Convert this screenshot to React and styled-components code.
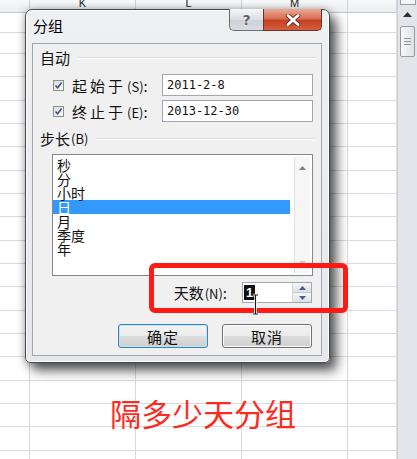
import React from "react";
import styled, { createGlobalStyle } from "styled-components";

const Global = createGlobalStyle`
  html, body { margin: 0; padding: 0; }
  body {
    width: 417px; height: 459px; overflow: hidden; background: #fff;
    font-family: "Noto Sans CJK SC", "Noto Sans", sans-serif;
  }
`;

const Screen = styled.div`
  position: relative;
  width: 417px;
  height: 459px;
  overflow: hidden;
  display: flex;
  background: #fff;
`;

const Sheet = styled.div`
  flex: 1;
  display: grid;
  grid-template-columns: 30px 106px 106px 106px 49px;
  grid-template-rows: 13px 20px 21px repeat(18, 23.33px);
  overflow: hidden;
`;

const Cell = styled.div`
  border-right: 1px solid #d8dadc;
  border-bottom: 1px solid #d8dadc;
`;

const HeaderCell = styled(Cell)`
  background: linear-gradient(#f7f8f9, #eceef0);
  border-bottom-color: #c3c6ca;
  border-right-color: #cfd2d6;
  overflow: hidden;
  text-align: center;
  font: 11px "Liberation Sans", Arial, sans-serif;
  color: #222;
  & > span { display: block; line-height: 13px; margin-top: -3px; }
`;

const PageScroll = styled.div`
  width: 20px;
  flex-shrink: 0;
  box-sizing: border-box;
  background: #e2e5e9;
  border-left: 1px solid #cdd1d6;
  display: flex;
  flex-direction: column;
  align-items: center;
`;

const SplitBox = styled.div`
  width: 16px;
  height: 5px;
  box-sizing: border-box;
  border: 1px solid #9aa0a8;
  border-top: none;
  background: #f5f6f7;
`;

const ArrowUp = styled.svg`
  margin-top: 7px;
  display: block;
`;

const Thumb = styled.div`
  margin-top: 9px;
  width: 15px;
  height: 31px;
  box-sizing: border-box;
  border: 1px solid #959ba3;
  border-radius: 2px;
  background: linear-gradient(90deg, #f8f9fa, #dfe2e6);
  display: flex;
  flex-direction: column;
  justify-content: center;
  align-items: center;
  gap: 2px;
  & > i { display: block; width: 7px; height: 1px; background: #8d939b; }
`;

const Dialog = styled.div`
  position: absolute;
  left: 25px;
  top: 9px;
  width: 305px;
  height: 354px;
  box-sizing: border-box;
  border: 1px solid #45484d;
  border-radius: 7px 7px 5px 5px;
  background: linear-gradient(#eef0f2, #e5e7ea);
  box-shadow: inset 0 0 0 1px rgba(255, 255, 255, 0.85),
    0 1px 8px rgba(0, 0, 0, 0.35), 7px 8px 12px rgba(0, 0, 0, 0.6);
  display: flex;
  flex-direction: column;
`;

const TitleBar = styled.div`
  height: 33px;
  flex-shrink: 0;
  display: flex;
  align-items: flex-start;
  padding: 0 7px;
`;

const Title = styled.div`
  flex: 1;
  margin-top: 7px;
  font-size: 15px;
  line-height: 18px;
  color: #000;
`;

const CaptionButtons = styled.div`
  display: flex;
  margin-top: -1px;
`;

const HelpBtn = styled.div`
  width: 34px;
  height: 22px;
  box-sizing: border-box;
  border: 1px solid #6a6e74;
  border-top: none;
  border-right: none;
  border-radius: 0 0 0 5px;
  background: linear-gradient(#f6f7f8, #dadde1 50%, #cdd1d5 51%, #d9dce0);
  display: flex;
  align-items: center;
  justify-content: center;
  font: bold 14px "DejaVu Sans", sans-serif;
  color: #5d6168;
  text-shadow: 0 0 2px #fff, 0 0 1px #fff;
`;

const CloseBtn = styled.div`
  width: 59px;
  height: 22px;
  box-sizing: border-box;
  border: 1px solid #6b3226;
  border-top: none;
  border-radius: 0 0 5px 0;
  background: linear-gradient(#eaa894, #d9705a 45%, #c6401f 55%, #d45f42);
  display: flex;
  align-items: center;
  justify-content: center;
`;

const Client = styled.div`
  flex: 1;
  margin: 0 7px 6px 6px;
  box-sizing: border-box;
  border: 1px solid #a2a7ad;
  background: #f0f0f0;
  padding: 5px 6px 0 7px;
  display: flex;
  flex-direction: column;
`;

const GroupHeader = styled.div`
  display: flex;
  align-items: center;
  height: 17px;
  margin-top: ${(p) => p.$top || 0}px;
  font-size: 15px;
  line-height: 17px;
  color: #111;
  &::after {
    content: "";
    flex: 1;
    margin-left: 8px;
    border-top: 1px solid #d5dfe5;
    border-bottom: 1px solid #fff;
  }
`;

const Key = styled.span`
  font-size: 13px;
  letter-spacing: 0;
  margin-left: 1px;
`;

const FieldRow = styled.div`
  display: flex;
  align-items: center;
  height: 22px;
  margin: ${(p) => p.$top}px 2px 0 13px;
`;

const Check = styled.div`
  width: 11px;
  height: 11px;
  box-sizing: border-box;
  border: 1px solid #8e8f8f;
  background: linear-gradient(135deg, #dcdcdc, #fbfbfb);
  display: flex;
  align-items: center;
  justify-content: center;
`;

const FieldLabel = styled.div`
  width: 90px;
  margin-left: 8px;
  font-size: 15px;
  letter-spacing: 3px;
  color: #111;
  white-space: nowrap;
`;

const TextInput = styled.div`
  flex: 1;
  height: 22px;
  box-sizing: border-box;
  border: 1px solid #a3a6ad;
  background: #fff;
  padding-left: 4px;
  display: flex;
  align-items: center;
  font: 12px "DejaVu Sans Mono", "Liberation Mono", monospace;
  color: #111;
`;

const ListBox = styled.div`
  margin: 7px 2px 0 12px;
  height: 122px;
  box-sizing: border-box;
  border: 1px solid #828790;
  background: #fff;
  display: flex;
`;

const Items = styled.div`
  flex: 1;
  padding-top: 3px;
  margin-right: 4px;
`;

const Item = styled.div`
  height: 14px;
  line-height: 14px;
  font-size: 14px;
  padding-left: 4px;
  overflow: visible;
  color: ${(p) => (p.$selected ? "#fff" : "#111")};
  background: ${(p) => (p.$selected ? "#3399ff" : "transparent")};
  white-space: nowrap;
`;

const ListScroll = styled.div`
  width: 16px;
  margin: 2px 2px 2px 0;
  box-sizing: border-box;
  border-left: 1px solid #e2e2e2;
  background: #f6f6f6;
  display: flex;
  flex-direction: column;
  justify-content: space-between;
  align-items: center;
  padding: 9px 0 8px;
`;

const DaysRow = styled.div`
  display: flex;
  justify-content: flex-end;
  align-items: center;
  gap: 15px;
  height: 21px;
  margin: 6px 3px 0 0;
`;

const DaysLabel = styled.div`
  font-size: 15px;
  color: #111;
  white-space: nowrap;
`;

const SpinBox = styled.div`
  width: 70px;
  height: 21px;
  box-sizing: border-box;
  border: 1px solid #a3a6ad;
  background: #fff;
  display: flex;
`;

const SpinValue = styled.div`
  flex: 1;
  display: flex;
  align-items: center;
  padding-left: 1px;
  & > span {
    display: inline-block;
    background: #111;
    color: #fff;
    font: bold 13px/15px "Liberation Sans", Arial, sans-serif;
    padding: 0 2px;
  }
`;

const SpinButtons = styled.div`
  width: 18px;
  display: flex;
  flex-direction: column;
  border-left: 1px solid #d3d7dc;
`;

const SpinButton = styled.div`
  flex: 1;
  display: flex;
  align-items: center;
  justify-content: center;
  background: linear-gradient(#f6f7f8, #dde0e4);
  border-bottom: ${(p) => (p.$top ? "1px solid #c5cad0" : "none")};
`;

const ButtonRow = styled.div`
  display: flex;
  justify-content: flex-end;
  gap: 14px;
  margin: 21px 3px 0 0;
`;

const DlgButton = styled.div`
  width: 90px;
  height: 24px;
  box-sizing: border-box;
  border-radius: 3px;
  border: 1px solid ${(p) => (p.$primary ? "#3c7fb1" : "#707070")};
  box-shadow: inset 0 0 0 1px ${(p) => (p.$primary ? "#bfe6f8" : "#fbfbfb")};
  background: linear-gradient(#f3f3f3, #ebebeb 50%, #dddddd 51%, #cfcfcf);
  display: flex;
  align-items: center;
  justify-content: center;
  font-size: 15px;
  letter-spacing: 1px;
  color: #111;
`;

const Annotation = styled.div`
  position: absolute;
  left: 149px;
  top: 263px;
  width: 199px;
  height: 50px;
  box-sizing: border-box;
  border: 5px solid #ff1a14;
  border-radius: 6px;
`;

const Caption = styled.div`
  position: absolute;
  left: 110px;
  top: 397px;
  font-size: 31px;
  line-height: 1;
  color: #ff2a1e;
  white-space: nowrap;
`;

const IBeam = styled.svg`
  position: absolute;
  left: 250px;
  top: 292px;
`;

const cols = ["J", "K", "L", "M", ""];
const ROWS = 20;

function CheckMark() {
  return (
    <svg width="9" height="9" viewBox="0 0 9 9">
      <path d="M1.5 4.5 L3.6 6.8 L7.6 1.6" fill="none" stroke="#3d4f93" strokeWidth="1.6" />
    </svg>
  );
}

function Tri({ up, color = "#4a4f58", w = 7, h = 4 }) {
  return (
    <svg width={w} height={h} viewBox={`0 0 ${w} ${h}`} style={{ display: "block" }}>
      <path d={up ? `M0 ${h} L${w / 2} 0 L${w} ${h} Z` : `M0 0 L${w / 2} ${h} L${w} 0 Z`} fill={color} />
    </svg>
  );
}

export default function App() {
  const cells = [];
  cols.forEach((c, i) =>
    cells.push(
      <HeaderCell key={"h" + i}>
        <span>{i === 0 ? "" : c}</span>
      </HeaderCell>
    )
  );
  for (let r = 0; r < ROWS; r++) {
    for (let c = 0; c < cols.length; c++) cells.push(<Cell key={r + "-" + c} />);
  }

  return (
    <Screen>
      <Global />
      <Sheet>{cells}</Sheet>
      <PageScroll>
        <SplitBox />
        <ArrowUp width="9" height="5" viewBox="0 0 9 5">
          <path d="M0 5 L4.5 0 L9 5 Z" fill="#2d3036" />
        </ArrowUp>
        <Thumb>
          <i />
          <i />
          <i />
        </Thumb>
      </PageScroll>

      <Dialog>
        <TitleBar>
          <Title>分组</Title>
          <CaptionButtons>
            <HelpBtn>?</HelpBtn>
            <CloseBtn>
              <svg width="16" height="12" viewBox="0 0 16 12">
                <path d="M3 1.5 L13 10.5 M13 1.5 L3 10.5" stroke="#6e2b1c" strokeWidth="4.6" strokeLinecap="round" />
                <path d="M3 1.5 L13 10.5 M13 1.5 L3 10.5" stroke="#fff" strokeWidth="2.8" strokeLinecap="round" />
              </svg>
            </CloseBtn>
          </CaptionButtons>
        </TitleBar>

        <Client>
          <GroupHeader>自动</GroupHeader>
          <FieldRow $top={8}>
            <Check>
              <CheckMark />
            </Check>
            <FieldLabel>
              起始于<Key>(S)</Key>:
            </FieldLabel>
            <TextInput>2011-2-8</TextInput>
          </FieldRow>
          <FieldRow $top={4}>
            <Check>
              <CheckMark />
            </Check>
            <FieldLabel>
              终止于<Key>(E)</Key>:
            </FieldLabel>
            <TextInput>2013-12-30</TextInput>
          </FieldRow>

          <GroupHeader $top={8}>
            步长<Key>(B)</Key>
          </GroupHeader>
          <ListBox>
            <Items>
              {["秒", "分", "小时", "日", "月", "季度", "年"].map((t) => (
                <Item key={t} $selected={t === "日"}>
                  {t}
                </Item>
              ))}
            </Items>
            <ListScroll>
              <Tri up color="#7b7f86" />
              <Tri color="#c6c9cd" />
            </ListScroll>
          </ListBox>

          <DaysRow>
            <DaysLabel>
              天数<Key>(N)</Key>:
            </DaysLabel>
            <SpinBox>
              <SpinValue>
                <span>1</span>
              </SpinValue>
              <SpinButtons>
                <SpinButton $top>
                  <Tri up color="#4b5c93" />
                </SpinButton>
                <SpinButton>
                  <Tri color="#4b5c93" />
                </SpinButton>
              </SpinButtons>
            </SpinBox>
          </DaysRow>

          <ButtonRow>
            <DlgButton $primary>确定</DlgButton>
            <DlgButton>取消</DlgButton>
          </ButtonRow>
        </Client>
      </Dialog>

      <Annotation />
      <IBeam width="10" height="24" viewBox="0 0 10 24">
        <path d="M3 3 H8 M5.5 3 V22 M3 22 H8" stroke="#fff" strokeWidth="2.6" fill="none" />
        <path d="M3 3 H8 M5.5 3 V22 M3 22 H8" stroke="#1a1a1a" strokeWidth="1.1" fill="none" />
      </IBeam>
      <Caption>隔多少天分组</Caption>
    </Screen>
  );
}
